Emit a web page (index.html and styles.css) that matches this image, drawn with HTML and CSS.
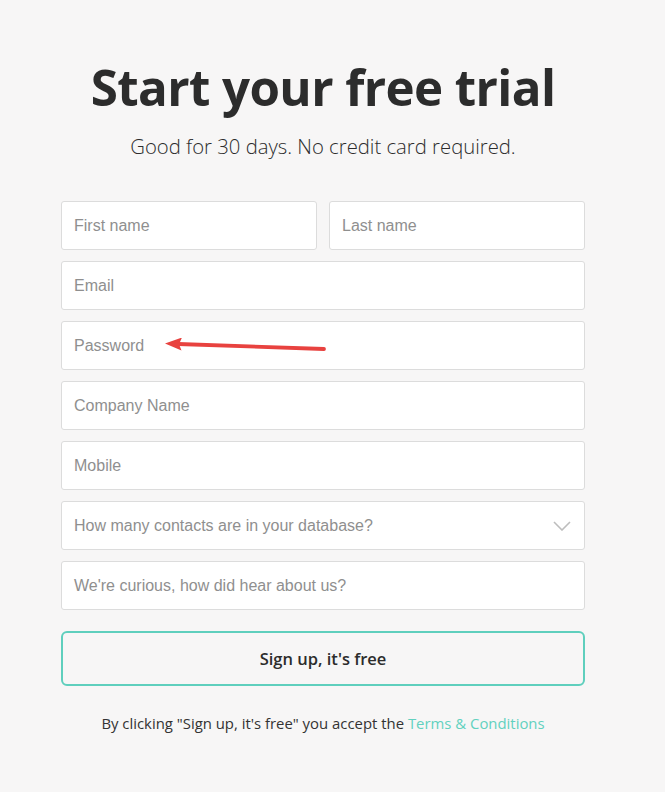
FILE: index.html
```html
<!DOCTYPE html>
<html>
<head>
<meta charset="utf-8">
<link rel="stylesheet" href="styles.css">
</head>
<body>
<main class="page">
  <h1 class="title">Start your free trial</h1>
  <p class="subtitle">Good for 30 days. No credit card required.</p>
  <form class="form">
    <div class="row">
      <div class="field"><span class="ph">First name</span></div>
      <div class="field"><span class="ph">Last name</span></div>
    </div>
    <div class="field"><span class="ph">Email</span></div>
    <div class="field field-arrow">
      <span class="ph">Password</span>
      <svg class="arrow" width="170" height="20" viewBox="0 0 170 20">
        <line x1="14" y1="6" x2="160" y2="11" stroke="#e8423f" stroke-width="3.8" stroke-linecap="round"/>
        <polygon points="1,5.5 18,-0.5 15,6.3 17.5,12.5" fill="#e8423f"/>
      </svg>
    </div>
    <div class="field"><span class="ph">Company Name</span></div>
    <div class="field"><span class="ph">Mobile</span></div>
    <div class="field field-select">
      <span class="ph">How many contacts are in your database?</span>
      <svg class="chev" width="18" height="10" viewBox="0 0 18 10"><polyline points="1,1 9,9 17,1" fill="none" stroke="#bdbdbd" stroke-width="1.6"/></svg>
    </div>
    <div class="field"><span class="ph">We're curious, how did hear about us?</span></div>
    <button type="button" class="btn">Sign up, it's free</button>
  </form>
  <p class="terms">By clicking "Sign up, it's free" you accept the <a class="link">Terms &amp; Conditions</a></p>
</main>
</body>
</html>
```
FILE: styles.css
```css
html, body { margin: 0; padding: 0; }
body {
  background: #f7f6f6;
  width: 665px;
  height: 792px;
  overflow: hidden;
}
.page {
  width: 524px;
  margin-left: 61px;
  padding-top: 53px;
}
.title {
  margin: 0;
  text-align: center;
  font-family: "Open Sans", sans-serif;
  font-weight: 700;
  font-size: 49.3px;
  line-height: 68px;
  color: #2c2c2c;
  letter-spacing: -0.6px;
}
.subtitle {
  margin: 11px 0 0;
  text-align: center;
  font-family: "Open Sans", sans-serif;
  font-weight: 300;
  font-size: 20.3px;
  line-height: 28px;
  color: #2c2c2c;
}
.form {
  margin-top: 41px;
  display: flex;
  flex-direction: column;
  gap: 11px;
}
.row {
  display: flex;
  gap: 12px;
}
.row .field { flex: 1; }
.field {
  position: relative;
  box-sizing: border-box;
  height: 49px;
  background: #fff;
  border: 1px solid #dcdcdc;
  border-radius: 3px;
  display: flex;
  align-items: center;
  padding-left: 12px;
}
.ph {
  font-family: "Liberation Sans", Arial, sans-serif;
  font-size: 16px;
  color: #8f8f8f;
}
.arrow {
  position: absolute;
  left: 102px;
  top: 16px;
}
.chev {
  position: absolute;
  right: 13px;
  top: 19px;
}
.btn {
  margin-top: 10px;
  height: 55px;
  box-sizing: border-box;
  border: 2px solid #5fcfbd;
  border-radius: 6px;
  background: transparent;
  font-family: "Open Sans", sans-serif;
  font-size: 16.5px;
  font-weight: 600;
  color: #2c2c2c;
}
.terms {
  margin: 27px 0 0;
  text-align: center;
  font-family: "Open Sans", sans-serif;
  font-size: 14.9px;
  color: #333;
}
.link { color: #62d1bf; }
```
